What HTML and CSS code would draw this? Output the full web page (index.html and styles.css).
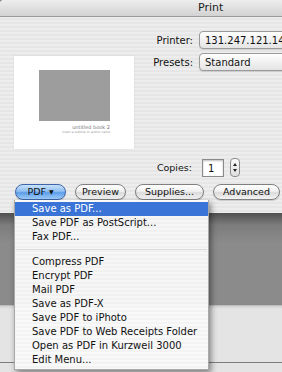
FILE: index.html
```html
<!DOCTYPE html>
<html lang="en">
<head>
  <meta charset="UTF-8">
  <title>Print</title>
  <link rel="stylesheet" href="styles.css">
</head>
<body>
  <div class="screen">
    <div class="dialog">
      <div class="titlebar">Print</div>
      <div class="dialog-body">
        <div class="top">
          <div class="preview">
            <div class="preview-photo"></div>
            <div class="preview-title">untitled book 2</div>
            <div class="preview-sub">insert a subtitle or author name</div>
          </div>
          <div class="fields">
            <div class="field-row">
              <span class="field-label">Printer:</span>
              <div class="popup">131.247.121.14</div>
            </div>
            <div class="field-row">
              <span class="field-label">Presets:</span>
              <div class="popup">Standard</div>
            </div>
          </div>
        </div>

        <div class="copies">
          <span class="copies-label">Copies:</span>
          <div class="copies-input">1</div>
          <div class="stepper">
            <span class="arrow-up"></span>
            <span class="arrow-down"></span>
          </div>
        </div>

        <div class="buttons">
          <div class="btn btn-pdf">PDF <span class="caret">&#9660;</span></div>
          <div class="btn btn-preview">Preview</div>
          <div class="btn btn-supplies">Supplies...</div>
          <div class="btn btn-advanced">Advanced</div>
        </div>
      </div>
    </div>

    <div class="backdrop">
      <div class="back-window">
        <div class="back-line"></div>
      </div>
    </div>

    <div class="menu">
      <div class="menu-item selected">Save as PDF...</div>
      <div class="menu-item">Save PDF as PostScript...</div>
      <div class="menu-item">Fax PDF...</div>
      <div class="menu-sep"></div>
      <div class="menu-item">Compress PDF</div>
      <div class="menu-item">Encrypt PDF</div>
      <div class="menu-item">Mail PDF</div>
      <div class="menu-item">Save as PDF-X</div>
      <div class="menu-item">Save PDF to iPhoto</div>
      <div class="menu-item">Save PDF to Web Receipts Folder</div>
      <div class="menu-item">Open as PDF in Kurzweil 3000</div>
      <div class="menu-item">Edit Menu...</div>
    </div>
  </div>
</body>
</html>
```

FILE: styles.css
```css
html, body {
  margin: 0;
  padding: 0;
  overflow: hidden;
}

body {
  font-family: 'DejaVu Sans', Verdana, sans-serif;
  font-size: 10px;
  color: #111;
  background-color: #8b8b8b;
}

.screen {
  position: relative;
  width: 282px;
  height: 372px;
  overflow: hidden;
}

.dialog {
  height: 213px;
  background: repeating-linear-gradient(#ededed 0 2px, #e6e6e6 2px 4px);
  border-top-left-radius: 4px;
}

.titlebar {
  height: 16px;
  line-height: 16px;
  padding-left: 198px;
  font-size: 11px;
  color: #222;
  background: linear-gradient(#eeeeee, #d2d2d2);
  border-bottom: 1px solid #9a9a9a;
  border-top-left-radius: 4px;
}

.dialog-body {
  padding: 14px 0 0 14px;
}

.top {
  display: flex;
}

.preview {
  width: 120px;
  height: 93px;
  margin-top: 25px;
  background-color: #fff;
  box-shadow: 0 0 1px rgba(0, 0, 0, 0.15);
  box-sizing: border-box;
  padding: 14px 24px 0 25px;
  display: flex;
  flex-direction: column;
  align-items: flex-end;
}

.preview-photo {
  width: 71px;
  height: 51px;
  background-color: #9d9d9d;
}

.preview-title {
  margin-top: 3px;
  font-size: 5px;
  color: #777;
  line-height: 6px;
}

.preview-sub {
  font-size: 3px;
  color: #999;
  line-height: 4px;
}

.fields {
  display: flex;
  flex-direction: column;
  gap: 4px;
}

.field-row {
  display: flex;
  align-items: center;
}

.field-label {
  width: 59px;
  text-align: right;
  margin-right: 6px;
  color: #111;
}

.popup {
  width: 110px;
  height: 18px;
  line-height: 18px;
  padding-left: 5px;
  box-sizing: border-box;
  font-size: 10px;
  white-space: nowrap;
  background: linear-gradient(#ffffff, #f1f1f1 50%, #e4e4e4);
  border: 1px solid #9a9a9a;
  border-radius: 4px 0 0 4px;
  box-shadow: 0 1px 1px rgba(0, 0, 0, 0.12);
}

.copies {
  display: flex;
  align-items: center;
  margin-top: 9px;
  height: 19px;
}

.copies-label {
  width: 178px;
  text-align: right;
  font-size: 9.5px;
}

.copies-input {
  width: 22px;
  height: 18px;
  margin-left: 10px;
  box-sizing: border-box;
  padding-left: 5px;
  line-height: 17px;
  background-color: #fff;
  border: 1px solid #8a8a8a;
  box-shadow: inset 0 1px 2px rgba(0, 0, 0, 0.25);
}

.stepper {
  width: 10px;
  height: 19px;
  margin-left: 6px;
  box-sizing: border-box;
  border: 1px solid #8c8c8c;
  border-radius: 4px;
  background: linear-gradient(#fafafa, #dedede);
  display: flex;
  flex-direction: column;
  align-items: center;
  justify-content: center;
  gap: 3px;
}

.arrow-up {
  border-left: 2px solid transparent;
  border-right: 2px solid transparent;
  border-bottom: 3px solid #222;
}

.arrow-down {
  border-left: 2px solid transparent;
  border-right: 2px solid transparent;
  border-top: 3px solid #222;
}

.buttons {
  display: flex;
  gap: 9px;
  margin-top: 7px;
  margin-left: 1px;
}

.btn {
  height: 16px;
  line-height: 14px;
  box-sizing: border-box;
  text-align: center;
  font-size: 9.5px;
  color: #111;
  border: 1px solid #808080;
  border-radius: 8px;
  background: linear-gradient(#ffffff, #f0f0f0 45%, #dadada 55%, #f4f4f4);
  box-shadow: 0 1px 1px rgba(0, 0, 0, 0.15);
}

.btn-pdf {
  width: 51px;
  border-color: #3f64a8;
  background: linear-gradient(#c8e2fb, #8ebef2 45%, #5c9ce8 55%, #9fd0fb);
}

.caret {
  font-size: 6px;
  vertical-align: 1px;
}

.btn-preview {
  width: 51px;
}

.btn-supplies {
  width: 69px;
}

.btn-advanced {
  width: 67px;
}

.backdrop {
  height: 159px;
  background: linear-gradient(#505050, #7c7c7c 12px, #8b8b8b 30px);
  padding-top: 92px;
  box-sizing: border-box;
}

.back-window {
  height: 67px;
  border-top: 1px solid #bcbcbc;
  background: linear-gradient(#d0d0d0, #e4e4e4 3px);
  padding-top: 56px;
  box-sizing: border-box;
}

.back-line {
  height: 1px;
  background-color: #7e7e7e;
}

.menu {
  position: absolute;
  left: 14px;
  top: 200px;
  width: 195px;
  padding: 2px 0 2px;
  background: repeating-linear-gradient(rgba(250, 250, 250, 0.97) 0 2px, rgba(244, 244, 244, 0.97) 2px 4px);
  border: 1px solid #a8a8a8;
  border-top: none;
  box-shadow: 2px 3px 6px rgba(0, 0, 0, 0.45);
  box-sizing: border-box;
}

.menu-item {
  height: 14px;
  line-height: 14px;
  padding-left: 17px;
  white-space: nowrap;
  color: #111;
}

.menu-item.selected {
  background-color: #3a74d6;
  color: #fff;
}

.menu-sep {
  height: 11px;
  position: relative;
}

.menu-sep::after {
  content: "";
  position: absolute;
  left: 1px;
  right: 1px;
  top: 5px;
  height: 1px;
  background-color: #dcdcdc;
}
```
